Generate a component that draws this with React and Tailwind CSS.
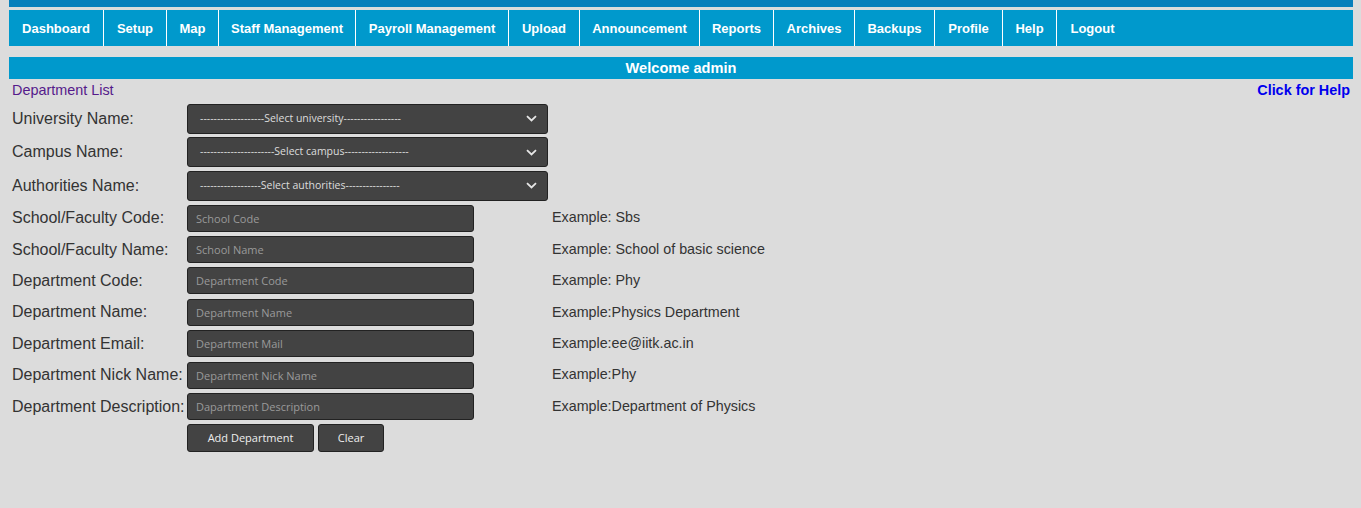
import { useState } from 'react';

const navItems = [
  { name: 'Dashboard', w: 'w-[94px]' },
  { name: 'Setup', w: 'w-[63px]' },
  { name: 'Map', w: 'w-[52px]' },
  { name: 'Staff Management', w: 'w-[137px]' },
  { name: 'Payroll Management', w: 'w-[153px]' },
  { name: 'Upload', w: 'w-[71px]' },
  { name: 'Announcement', w: 'w-[120px]' },
  { name: 'Reports', w: 'w-[74px]' },
  { name: 'Archives', w: 'w-[81px]' },
  { name: 'Backups', w: 'w-[80px]' },
  { name: 'Profile', w: 'w-[68px]' },
  { name: 'Help', w: 'w-[54px]' },
  { name: 'Logout', w: 'w-[72px]' },
];

const selects = [
  { label: 'University Name:', text: '-------------------Select university-----------------' },
  { label: 'Campus Name:', text: '----------------------Select campus-------------------' },
  { label: 'Authorities Name:', text: '------------------Select authorities----------------' },
];

const fields = [
  { label: 'School/Faculty Code:', ph: 'School Code', example: 'Example: Sbs' },
  { label: 'School/Faculty Name:', ph: 'School Name', example: 'Example: School of basic science' },
  { label: 'Department Code:', ph: 'Department Code', example: 'Example: Phy' },
  { label: 'Department Name:', ph: 'Department Name', example: 'Example:Physics Department' },
  { label: 'Department Email:', ph: 'Department Mail', example: 'Example:ee@iitk.ac.in' },
  { label: 'Department Nick Name:', ph: 'Department Nick Name', example: 'Example:Phy' },
  { label: 'Department Description:', ph: 'Dapartment Description', example: 'Example:Department of Physics' },
];

function Chevron() {
  return (
    <svg width="11" height="7" viewBox="0 0 11 7" className="shrink-0">
      <path d="M1 1.2 L5.5 5.5 L10 1.2" stroke="#e6e6e6" strokeWidth="1.8" fill="none" />
    </svg>
  );
}

export default function App() {
  const [values, setValues] = useState({});

  return (
    <div className="min-h-[508px] bg-[#dcdcdc] pl-[9px] pr-[8px] font-['Liberation_Sans',Arial,sans-serif] text-[#333]">
      <div className="h-[7px] bg-[#067fbb]" />
      <nav className="mt-[3px] flex h-[36px] bg-[#0099cc]">
        {navItems.map((item, i) => (
          <div
            key={item.name}
            className={`flex items-center justify-center pt-[1px] text-[13px] font-bold text-white ${item.w} ${i > 0 ? 'border-l border-white' : ''}`}
          >
            {item.name}
          </div>
        ))}
      </nav>

      <div className="mt-[11px] flex h-[22px] items-center justify-center bg-[#0099cc] pt-[2px] text-[14.6px] font-bold text-white">
        Welcome admin
      </div>

      <div className="mt-[3px] flex h-[18px] items-center justify-between px-[3px] text-[14.4px]">
        <span className="text-[#551a8b]">Department List</span>
        <span className="font-bold text-[#0000ee]">Click for Help</span>
      </div>

      <div className="mt-[2px] pl-[3px]">
        {selects.map((s) => (
          <div key={s.label} className="flex h-[33.5px] items-center">
            <span className="w-[175px] text-[16px]">{s.label}</span>
            <div className="flex h-[30px] w-[361px] items-center justify-between rounded-[3px] border border-[#222] bg-[#434343] pl-[12px] pr-[10px] font-['Open_Sans',sans-serif] text-[10.5px] text-[#ddd]">
              <span>{s.text}</span>
              <Chevron />
            </div>
          </div>
        ))}

        {fields.map((f) => (
          <div key={f.label} className="flex h-[31.4px] items-center">
            <span className="w-[175px] whitespace-nowrap text-[16px]">{f.label}</span>
            <div className="w-[365px]">
              <input
                className="block h-[27px] w-[287px] rounded-[3px] border border-[#222] bg-[#434343] px-[8px] font-['Open_Sans',sans-serif] text-[11px] text-[#eee] outline-none placeholder:text-[#9a9a9a]"
                placeholder={f.ph}
                value={values[f.label] || ''}
                onChange={(e) => setValues({ ...values, [f.label]: e.target.value })}
              />
            </div>
            <span className="text-[14.3px]">{f.example}</span>
          </div>
        ))}

        <div className="mt-[2px] flex gap-[4px] pl-[175px]">
          <button className="h-[28px] w-[127px] rounded-[3px] border border-[#222] bg-[#434343] font-['Open_Sans',sans-serif] text-[11px] text-[#eee]">
            Add Department
          </button>
          <button className="h-[28px] w-[66px] rounded-[3px] border border-[#222] bg-[#434343] font-['Open_Sans',sans-serif] text-[11px] text-[#eee]">
            Clear
          </button>
        </div>
      </div>
    </div>
  );
}
